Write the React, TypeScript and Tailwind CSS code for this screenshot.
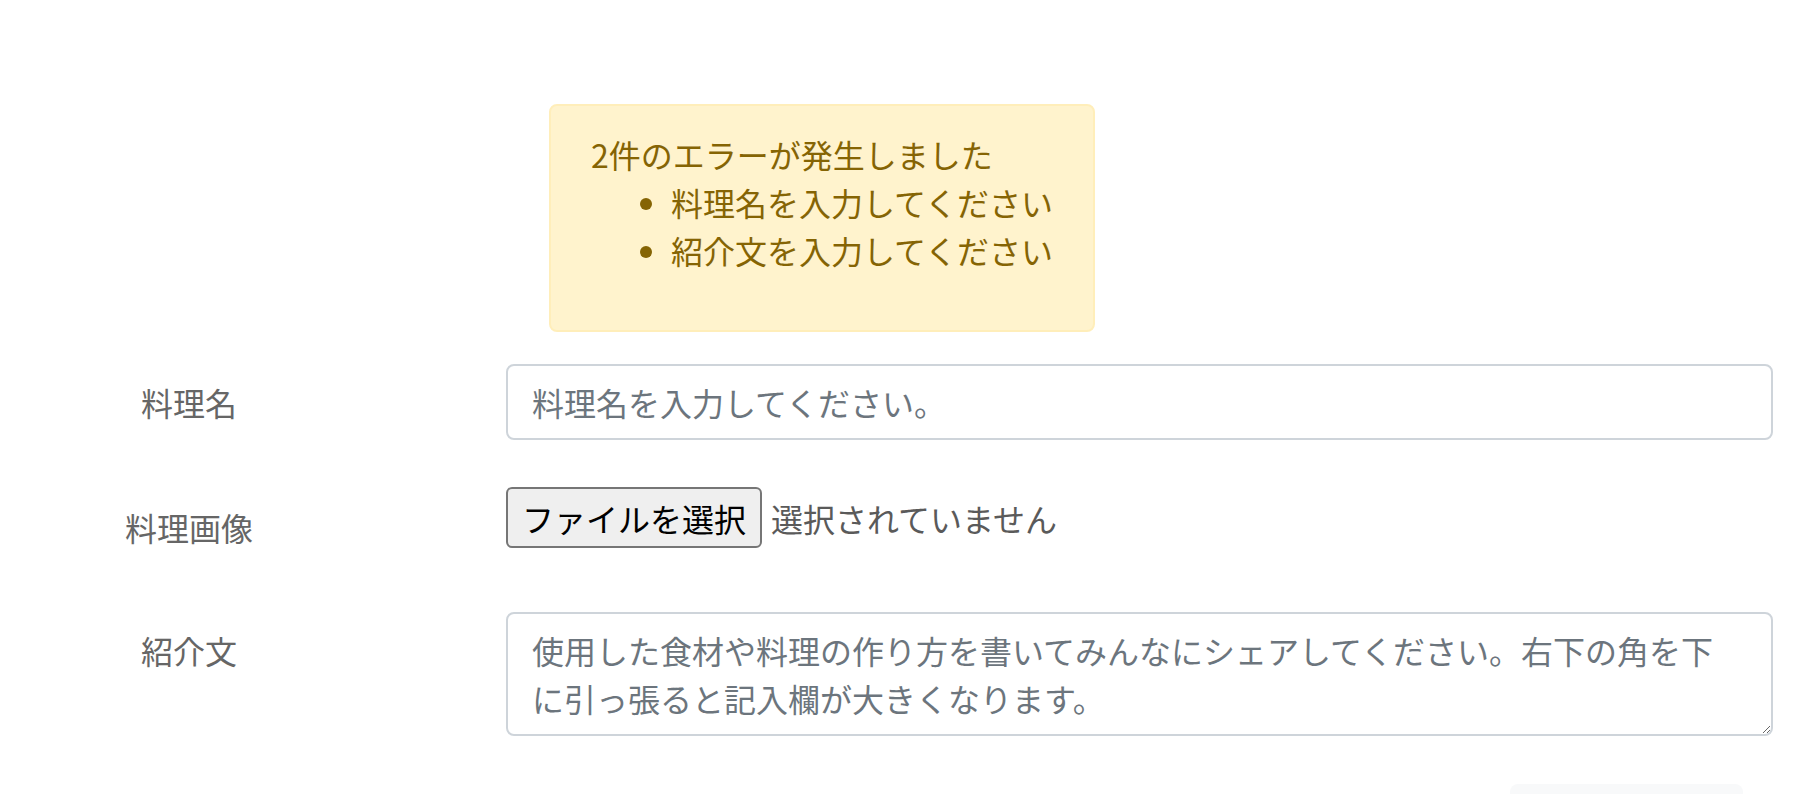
export default function App() {
  return (
    <div className="min-h-screen bg-white pt-[104px] font-['Noto_Sans_CJK_JP',sans-serif] text-[32px] leading-[48px]">
      <div className="ml-[549px] w-fit rounded-[8px] border-2 border-[#ffeeba] bg-[#fff3cd] px-[40px] pt-[24px] pb-[24px] text-[#856404]">
        <p>2件のエラーが発生しました</p>
        <ul className="mb-[32px] list-disc pl-[80px]">
          <li>料理名を入力してください</li>
          <li>紹介文を入力してください</li>
        </ul>
      </div>

      <form className="mr-[43px] mt-[32px]">
        <div className="flex">
          <label className="w-[378px] shrink-0 pt-[14px] text-center text-[#666666]">料理名</label>
          <input
            type="text"
            placeholder="料理名を入力してください。"
            className="ml-[128px] h-[76px] flex-1 rounded-[8px] border-2 border-[#ced4da] bg-white px-[24px] py-[12px] text-[#495057] outline-none placeholder:text-[#6c757d]"
          />
        </div>

        <div className="mt-[47px] flex items-start">
          <label className="w-[378px] shrink-0 pt-[16px] text-center text-[#666666]">料理画像</label>
          <div className="ml-[128px] flex flex-1 items-center">
            <button
              type="button"
              className="h-[61px] rounded-[6px] border-2 border-[#767676] bg-[#efefef] px-[14px] leading-[44px] text-black"
            >
              ファイルを選択
            </button>
            <span className="ml-[9px] text-[#5a5a5a]">選択されていません</span>
          </div>
        </div>

        <div className="mt-[61px] flex">
          <label className="w-[378px] shrink-0 pt-[14px] text-center text-[#666666]">紹介文</label>
          <textarea
            rows={2}
            placeholder="使用した食材や料理の作り方を書いてみんなにシェアしてください。右下の角を下に引っ張ると記入欄が大きくなります。"
            className="ml-[128px] h-[124px] flex-1 rounded-[8px] border-2 border-[#ced4da] bg-white py-[12px] pl-[24px] pr-[44px] text-[#495057] outline-none placeholder:text-[#6c757d]"
          />
        </div>

        <div className="mt-[48px] flex justify-end pr-[30px]">
          <div className="h-[60px] w-[233px] rounded-[8px] bg-[#f8f9fa]" />
        </div>
      </form>
    </div>
  );
}
